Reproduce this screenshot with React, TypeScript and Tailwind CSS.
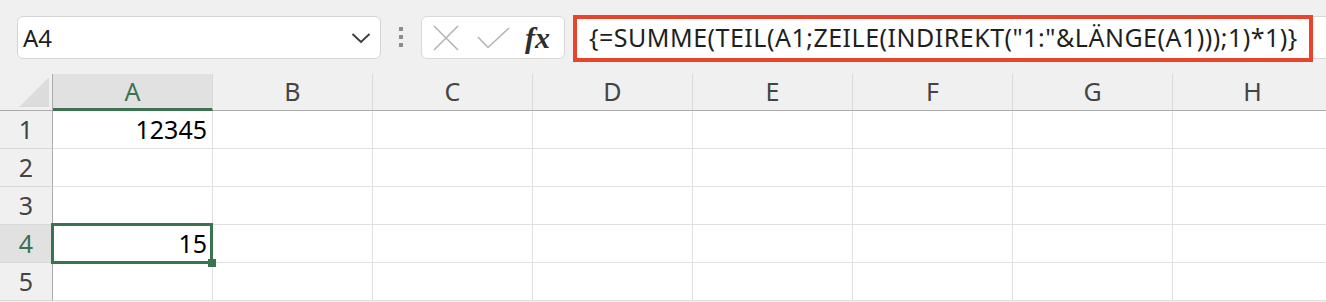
import React from 'react';

const columns = ['A', 'B', 'C', 'D', 'E', 'F', 'G', 'H'];
const rows = [1, 2, 3, 4, 5];

const values: Record<string, string> = {
  A1: '12345',
  A4: '15',
};

const green = 'text-[#3b7350]';

function Toolbar() {
  return (
    <div className="relative flex h-[74px] items-start pt-[16px]">
      {/* Name box */}
      <div className="ml-[17px] flex h-[43px] w-[364px] items-center justify-between rounded-[6px] border border-[#d4d4d4] bg-white pl-[5px] pr-[9px]">
        <span className="text-[24px] text-[#1f1f1f]">A4</span>
        <svg width="20" height="12" viewBox="0 0 20 12" fill="none">
          <path d="M1.5 2 L10 10 L18.5 2" stroke="#3a3a3a" strokeWidth="1.8" />
        </svg>
      </div>

      {/* Kebab */}
      <div className="ml-[18px] mt-[11px] flex flex-col gap-[4px]">
        <span className="h-[4px] w-[4px] bg-[#8d8d8d]" />
        <span className="h-[4px] w-[4px] bg-[#8d8d8d]" />
        <span className="h-[4px] w-[4px] bg-[#8d8d8d]" />
      </div>

      {/* Cancel / Enter / fx */}
      <div className="ml-[18px] flex h-[43px] w-[144px] items-center rounded-[6px] border border-[#d8d8d8] bg-white pl-[11px]">
        <svg width="26" height="26" viewBox="0 0 26 26" fill="none">
          <path d="M1 1 L25 25 M25 1 L1 25" stroke="#b4b4b4" strokeWidth="1.6" />
        </svg>
        <svg className="ml-[18px]" width="33" height="22" viewBox="0 0 33 22" fill="none">
          <path d="M1 10 L11 20.5 L32 1" stroke="#b4b4b4" strokeWidth="1.6" />
        </svg>
        <span className="ml-[15px] font-['Liberation_Serif',serif] text-[30px] font-bold italic leading-none text-[#2e2e2e]">
          fx
        </span>
      </div>

      {/* Formula input */}
      <div className="ml-[9px] flex h-[43px] flex-1 items-center rounded-l-[6px] border border-r-0 border-[#d8d8d8] bg-white pl-[14px]">
        <span className="whitespace-nowrap text-[25px] tracking-[0.5px] text-[#1f1f1f]">
          {'{=SUMME(TEIL(A1;ZEILE(INDIREKT("1:"&LÄNGE(A1)));1)*1)}'}
        </span>
      </div>

      {/* Red annotation frame */}
      <div className="pointer-events-none absolute left-[573px] top-[15px] h-[47px] w-[740px] border-[4px] border-[#e8432b]" />
    </div>
  );
}

function Sheet() {
  return (
    <div className="grid grid-cols-[53px_repeat(8,160px)] grid-rows-[37px_repeat(5,38px)]">
      {/* Corner */}
      <div className="flex items-end justify-end border-b border-r border-[#ababab] bg-[#f0f0f0] pb-[3px] pr-[3px]">
        <svg width="30" height="30" viewBox="0 0 30 30">
          <path d="M30 0 L30 30 L0 30 Z" fill="#dcdcdc" />
        </svg>
      </div>

      {columns.map((c) =>
        c === 'A' ? (
          <div
            key={c}
            className={`flex items-center justify-center border-b-[3px] border-r border-b-[#3b7350] border-r-[#d9d9d9] bg-[#e1e1e1] pt-[2px] text-[25px] ${green}`}
          >
            {c}
          </div>
        ) : (
          <div
            key={c}
            className="flex items-center justify-center border-b border-r border-b-[#ababab] border-r-[#d9d9d9] bg-[#f0f0f0] text-[25px] text-[#444444]"
          >
            {c}
          </div>
        ),
      )}

      {rows.map((r) => (
        <React.Fragment key={r}>
          <div
            className={`flex items-center justify-center border-b border-r border-b-[#d9d9d9] border-r-[#ababab] text-[25px] ${
              r === 4 ? `bg-[#e1e1e1] ${green}` : 'bg-[#f0f0f0] text-[#444444]'
            }`}
          >
            {r}
          </div>
          {columns.map((c) => {
            const id = `${c}${r}`;
            return (
              <div
                key={id}
                className={`relative flex items-center justify-end border-b border-r border-[#e1e1e1] bg-white pr-[5px] text-[25px] text-black ${
                  id === 'A4' ? 'z-10' : ''
                }`}
              >
                {values[id]}
                {id === 'A4' && (
                  <>
                    <div className="absolute -bottom-[2px] -left-[2px] -right-[1px] -top-[2px] border-[3px] border-[#3b7350]" />
                    <div className="absolute -bottom-[5px] -right-[4px] h-[8px] w-[8px] bg-[#3b7350]" />
                  </>
                )}
              </div>
            );
          })}
        </React.Fragment>
      ))}
    </div>
  );
}

export default function App() {
  return (
    <div className="h-[302px] w-[1326px] overflow-hidden bg-[#f0f0f0] font-['Noto_Sans','Open_Sans',sans-serif]">
      <Toolbar />
      <Sheet />
    </div>
  );
}
